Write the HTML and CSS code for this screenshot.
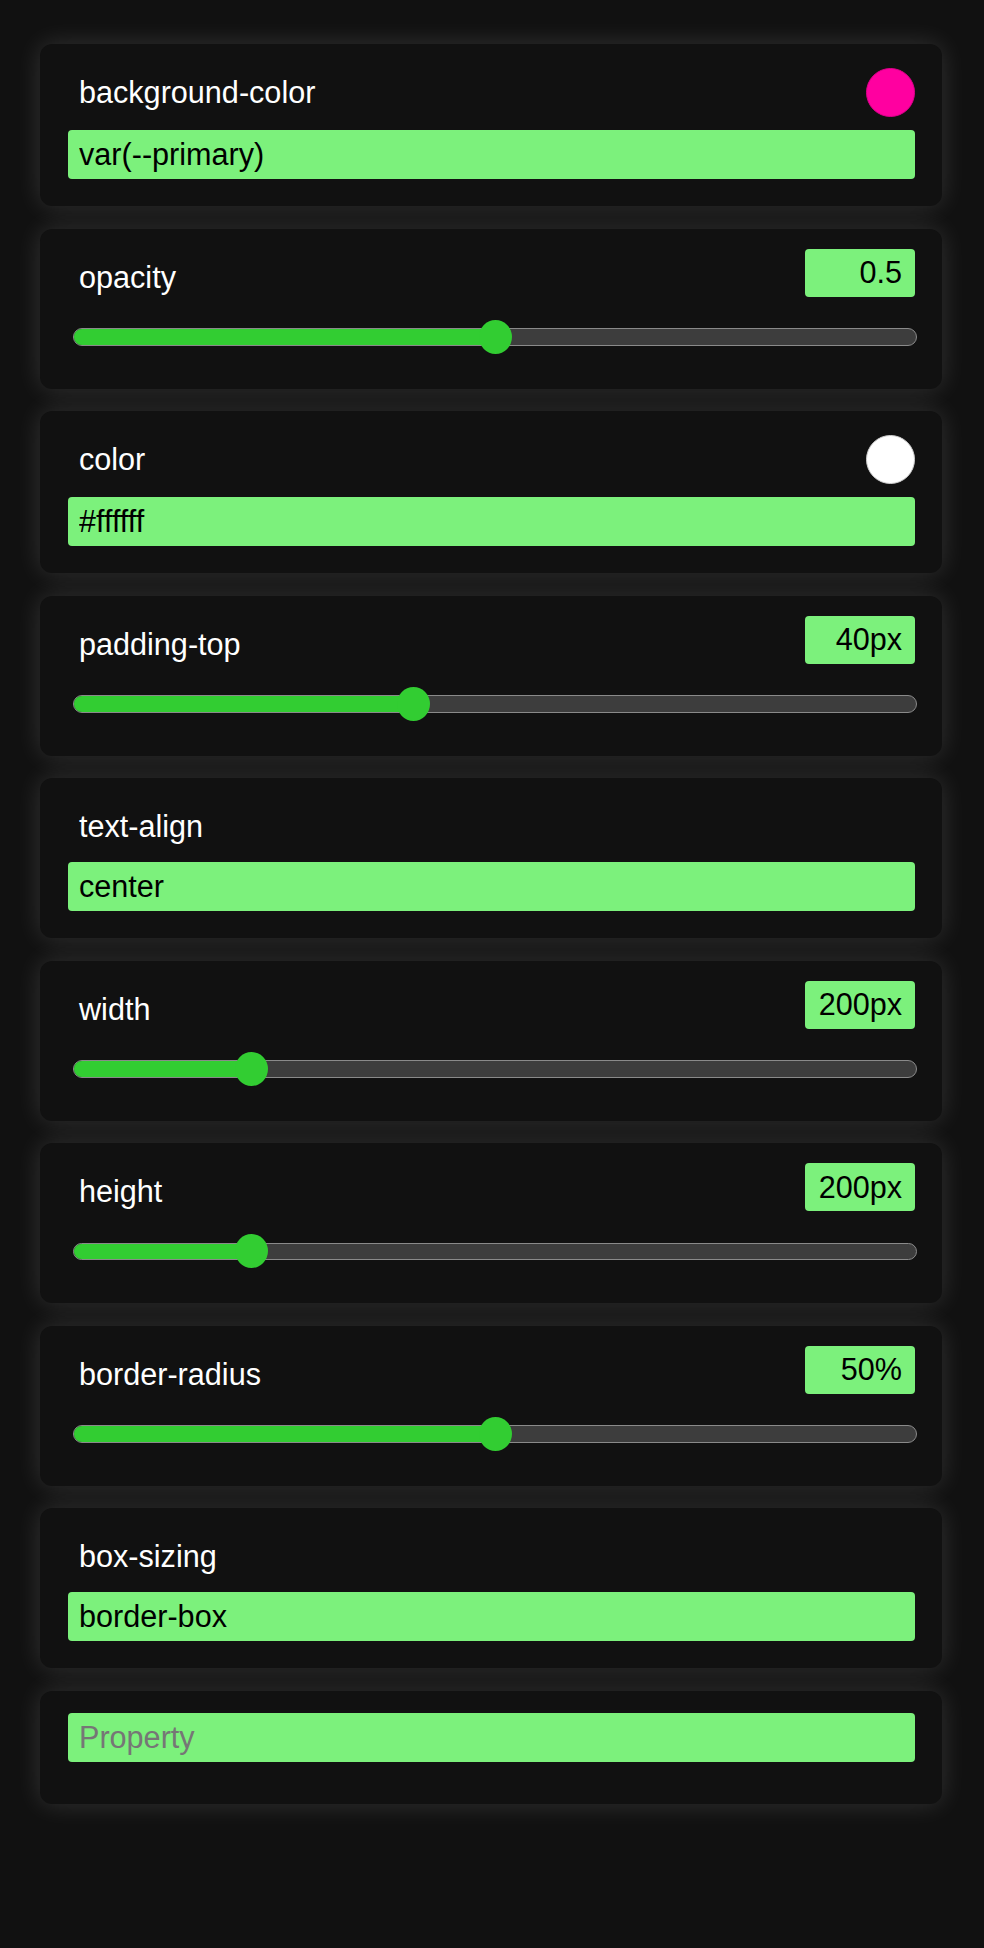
FILE: index.html
```html
<!DOCTYPE html>
<html lang="en">
<head>
<meta charset="utf-8">
<title>Style properties</title>
<link rel="stylesheet" href="styles.css">
</head>
<body>
<main class="panel">
  <section class="card card-color">
    <div class="head">
      <span class="label">background-color</span>
      <span class="swatch swatch-pink"></span>
    </div>
    <input class="field field-a" type="text" value="var(--primary)">
  </section>

  <section class="card card-slider">
    <div class="head">
      <span class="label">opacity</span>
      <input class="value" type="text" value="0.5">
    </div>
    <div class="slider" style="--v:0.5">
      <div class="track"><div class="fill"></div></div>
      <div class="thumb"></div>
    </div>
  </section>

  <section class="card card-color">
    <div class="head">
      <span class="label">color</span>
      <span class="swatch swatch-white"></span>
    </div>
    <input class="field field-a" type="text" value="#ffffff">
  </section>

  <section class="card card-slider">
    <div class="head">
      <span class="label">padding-top</span>
      <input class="value" type="text" value="40px">
    </div>
    <div class="slider" style="--v:0.4">
      <div class="track"><div class="fill"></div></div>
      <div class="thumb"></div>
    </div>
  </section>

  <section class="card card-text">
    <div class="head">
      <span class="label">text-align</span>
    </div>
    <input class="field field-c" type="text" value="center">
  </section>

  <section class="card card-slider">
    <div class="head">
      <span class="label">width</span>
      <input class="value" type="text" value="200px">
    </div>
    <div class="slider" style="--v:0.2">
      <div class="track"><div class="fill"></div></div>
      <div class="thumb"></div>
    </div>
  </section>

  <section class="card card-slider">
    <div class="head">
      <span class="label">height</span>
      <input class="value" type="text" value="200px">
    </div>
    <div class="slider" style="--v:0.2">
      <div class="track"><div class="fill"></div></div>
      <div class="thumb"></div>
    </div>
  </section>

  <section class="card card-slider">
    <div class="head">
      <span class="label">border-radius</span>
      <input class="value" type="text" value="50%">
    </div>
    <div class="slider" style="--v:0.5">
      <div class="track"><div class="fill"></div></div>
      <div class="thumb"></div>
    </div>
  </section>

  <section class="card card-text">
    <div class="head">
      <span class="label">box-sizing</span>
    </div>
    <input class="field field-c" type="text" value="border-box">
  </section>

  <section class="card card-new">
    <input class="field" type="text" placeholder="Property">
  </section>
</main>
</body>
</html>
```
FILE: styles.css
```css
html, body {
  margin: 0;
  padding: 0;
  background: #111111;
}

body {
  font-family: "Liberation Sans", Arial, Helvetica, sans-serif;
  color: #ffffff;
}

.panel {
  display: flex;
  flex-direction: column;
  gap: 22.5px;
  padding: 44px 42px 40px 40px;
}

.card {
  background: #111111;
  border-radius: 12px;
  box-shadow: 0 0 26px rgba(255, 255, 255, 0.14);
  padding: 20px 27px 27px 28px;
  display: flex;
  flex-direction: column;
}

.card-new {
  padding-top: 22px;
  padding-bottom: 42px;
}

.head {
  display: flex;
  justify-content: space-between;
  align-items: flex-start;
  height: 48px;
}

.label {
  display: block;
  margin-top: 8px;
  padding-left: 11px;
  font-size: 30.6px;
  line-height: 40px;
  color: #ffffff;
  white-space: nowrap;
}

.swatch {
  display: block;
  width: 49px;
  height: 49px;
  margin-top: 4px;
  border-radius: 50%;
  box-sizing: border-box;
}

.swatch-pink {
  background: #ff00a0;
  border: 1px solid #e0008c;
}

.swatch-white {
  background: #ffffff;
  border: 1.5px solid #cfcfcf;
}

.value,
.field {
  font-family: "Liberation Sans", Arial, Helvetica, sans-serif;
  font-size: 30.6px;
  color: #000000;
  background: #7cf17c;
  border: none;
  outline: none;
  border-radius: 4px;
  margin: 0;
  box-sizing: border-box;
}

.value {
  width: 110px;
  height: 48px;
  padding: 0 13px 0 8px;
  text-align: right;
}

.field {
  display: block;
  width: 100%;
  height: 49px;
  padding: 0 11px;
}

.field::placeholder {
  color: #767676;
  opacity: 1;
}

.field-a {
  margin-top: 18px;
}

.field-c {
  margin-top: 16px;
}

.slider {
  position: relative;
  height: 34px;
  margin: 23px -2px 8px 5px;
}

.track {
  position: absolute;
  left: 0;
  right: 0;
  top: 8.5px;
  height: 17.5px;
  box-sizing: border-box;
  border: 1.5px solid #8a8a8a;
  border-radius: 9px;
  background: #3d3d3d;
  overflow: hidden;
}

.fill {
  height: 100%;
  width: calc(var(--v) * (100% - 30px) + 15px);
  background: #32cd32;
}

.thumb {
  position: absolute;
  top: 0;
  left: calc(var(--v) * (100% - 33px));
  width: 33px;
  height: 34px;
  border-radius: 50%;
  background: #32cd32;
}
```
